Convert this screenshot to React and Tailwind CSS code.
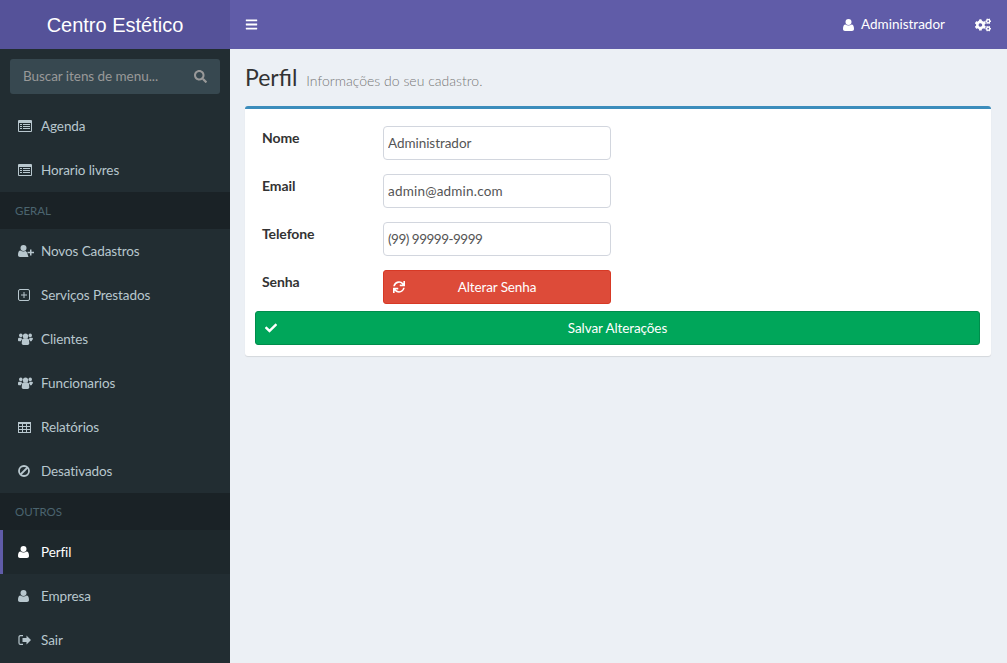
import React from 'react'
import { FaBars, FaSearch, FaCogs, FaSync, FaCheck } from 'react-icons/fa'

const font = "font-['Lato','Noto_Sans',sans-serif]"

function ListAltIcon() {
  return (
    <svg width="14" height="12" viewBox="0 0 14 12" fill="currentColor">
      <path fillRule="evenodd" d="M1 0h12a1 1 0 011 1v10a1 1 0 01-1 1H1a1 1 0 01-1-1V1a1 1 0 011-1zM1 3v8h12V3z" />
      <path d="M2 4h2v1H2zM5 4h7v1H5zM2 6h2v1H2zM5 6h7v1H5zM2 8h2v1H2zM5 8h7v1H5z" />
    </svg>
  )
}

function UserIcon() {
  return (
    <svg width="11" height="12" viewBox="0 0 11 12" fill="currentColor">
      <circle cx="5.5" cy="3" r="3" />
      <path d="M0 10c0-2.5.7-4.5 2.5-4.5.8.6 1.8 1 3 1s2.2-.4 3-1C10.3 5.5 11 7.5 11 10c0 1.2-.8 2-2 2H2c-1.2 0-2-.8-2-2z" />
    </svg>
  )
}

function UserPlusIcon() {
  return (
    <svg width="16" height="12" viewBox="0 0 16 12" fill="currentColor">
      <circle cx="5.5" cy="3" r="3" />
      <path d="M0 10c0-2.5.7-4.5 2.5-4.5.8.6 1.8 1 3 1 .8 0 1.5-.2 2.1-.5L9 7.5 9.5 9l1 3H2c-1.2 0-2-.8-2-2z" />
      <path d="M12 4.5h1.5v2.25H16v1.5h-2.5v2.25H12V8.25H9.5v-1.5H12z" />
    </svg>
  )
}

function PlusSquareIcon() {
  return (
    <svg width="12" height="12" viewBox="0 0 12 12" fill="none" stroke="currentColor">
      <rect x="0.5" y="0.5" width="11" height="11" rx="1.5" />
      <path d="M6 3v6M3 6h6" />
    </svg>
  )
}

function UsersIcon() {
  return (
    <svg width="15" height="12" viewBox="0 0 15 12" fill="currentColor">
      <circle cx="7.5" cy="3.2" r="2.6" />
      <circle cx="2.8" cy="2.4" r="1.8" />
      <circle cx="12.2" cy="2.4" r="1.8" />
      <path d="M4 7c0-1 1-1.5 2-1.5h3c1 0 2 .5 2 1.5l.3 3.3c0 1-.8 1.7-1.7 1.7H5.400c-.9 0-1.700-.7-1.700-1.700z" />
      <path d="M0 6c0-.8.6-1.2 1.5-1.2h2.2c-.2.6 0 1.2.3 1.6-.7.4-1 1-1 1.8H.8C.3 8.2 0 7.8 0 7.3z" />
      <path d="M15 6c0-.8-.6-1.2-1.5-1.2h-2.2c.2.6 0 1.2-.3 1.6.7.4 1 1 1 1.8h1.2c.5 0 .8-.4.8-.9z" />
    </svg>
  )
}

function TableIcon() {
  return (
    <svg width="13" height="11" viewBox="0 0 13 11" fill="none" stroke="currentColor">
      <rect x="0.5" y="0.5" width="12" height="10" />
      <path d="M0 1.5h13M0 4.5h13M0 7.5h13M4.500 1v10M8.500 1v10" />
    </svg>
  )
}

function BanIcon() {
  return (
    <svg width="12" height="12" viewBox="0 0 12 12" fill="none" stroke="currentColor" strokeWidth="1.8">
      <circle cx="6" cy="6" r="5" />
      <path d="M2.5 9.5l7-7" />
    </svg>
  )
}

function SignOutIcon() {
  return (
    <svg width="13" height="12" viewBox="0 0 13 12" fill="currentColor">
      <path d="M13 6L8.5 1.5V4h-4v4h4v2.500z" />
      <path d="M5 1.600H2.500A1.500 1.500 0 001 3.100v5.800a1.500 1.500 0 001.500 1.500H5" fill="none" stroke="currentColor" strokeWidth="1.2" />
    </svg>
  )
}

const topItems = [
  { label: 'Agenda', icon: ListAltIcon },
  { label: 'Horario livres', icon: ListAltIcon },
]

const geralItems = [
  { label: 'Novos Cadastros', icon: UserPlusIcon },
  { label: 'Serviços Prestados', icon: PlusSquareIcon },
  { label: 'Clientes', icon: UsersIcon },
  { label: 'Funcionarios', icon: UsersIcon },
  { label: 'Relatórios', icon: TableIcon },
  { label: 'Desativados', icon: BanIcon },
]

const outrosItems = [
  { label: 'Perfil', icon: UserIcon, active: true },
  { label: 'Empresa', icon: UserIcon },
  { label: 'Sair', icon: SignOutIcon },
]

function MenuItem({ label, icon: Icon, active }) {
  return (
    <a
      href="#"
      className={`flex h-11 items-center border-l-[3px] pl-[15px] ${
        active ? 'border-[#605ca8] bg-[#1e282c] text-white' : 'border-transparent text-[#b8c7ce]'
      }`}
    >
      <span className="flex w-[23px] shrink-0 items-center">
        <Icon />
      </span>
      <span className="text-[13.5px] leading-5 tracking-[-0.1px]">{label}</span>
    </a>
  )
}

function MenuHeader({ children }) {
  return (
    <div className="flex h-[37px] items-center bg-[#1a2226] pl-[15px] text-[11.5px] text-[#4b646f]">
      {children}
    </div>
  )
}

function Field({ label, value, className }) {
  return (
    <div className="flex items-start">
      <label className="mt-[2px] w-[121px] shrink-0 text-[14px] leading-5 font-bold tracking-[-0.1px] text-[#333]">{label}</label>
      <input
        readOnly
        value={value}
        className={`h-[34px] w-[228px] rounded-[4px] border border-[#d2d6de] px-1 text-[13.5px] text-[#555] outline-none ${className}`}
      />
    </div>
  )
}

export default function App() {
  return (
    <div className={`${font} flex h-[663px] overflow-hidden bg-[#ecf0f5]`}>
      {/* sidebar */}
      <aside className="flex w-[230px] shrink-0 flex-col bg-[#222d32]">
        <div className="flex h-[49px] shrink-0 items-center justify-center bg-[#555299] font-['Liberation_Sans',sans-serif] text-[20px] text-white">
          Centro Estético
        </div>
        <div className="mx-2.5 mt-2.5 mb-2.5 flex h-[35px] shrink-0 items-center justify-between rounded-[3px] bg-[#374850] px-[13px]">
          <span className="text-[13.5px] tracking-[-0.05px] text-[#999]">Buscar itens de menu...</span>
          <FaSearch className="text-[13px] text-[#999]" />
        </div>
        {topItems.map((item) => <MenuItem key={item.label} {...item} />)}
        <MenuHeader>GERAL</MenuHeader>
        {geralItems.map((item) => <MenuItem key={item.label} {...item} />)}
        <MenuHeader>OUTROS</MenuHeader>
        {outrosItems.map((item) => <MenuItem key={item.label} {...item} />)}
      </aside>

      <div className="flex min-w-0 flex-1 flex-col">
        {/* top bar */}
        <header className="flex h-[49px] shrink-0 items-center justify-between bg-[#605ca8] pr-4 pl-[15px] text-white">
          <FaBars className="text-[13px]" />
          <div className="flex items-center">
            <UserIcon />
            <span className="ml-[7px] text-[13.5px]">Administrador</span>
            <FaCogs className="ml-[30px] text-[16px]" />
          </div>
        </header>

        {/* content */}
        <main className="pt-[14px] pr-4 pl-[15px]">
          <div className="flex items-baseline">
            <h1 className="text-[23px] leading-7 text-[#333]">Perfil</h1>
            <small className="ml-[9px] text-[14px] font-light text-[#777]">Informações do seu cadastro.</small>
          </div>
          <section className="mt-[15px] rounded-[3px] border-t-[3px] border-[#3c8dbc] bg-white pt-[17px] pr-[11px] pb-[11px] pl-2.5 shadow-[0_1px_1px_rgba(0,0,0,0.1)]">
            <div className="flex flex-col gap-[14px] px-[7px]">
              <Field label="Nome" value="Administrador" className="tracking-[-0.05px]" />
              <Field label="Email" value="admin@admin.com" className="tracking-[0.2px]" />
              <Field label="Telefone" value="(99) 99999-9999" className="tracking-[-0.5px]" />
              <div className="flex items-start">
                <label className="mt-[2px] w-[121px] shrink-0 text-[14px] leading-5 font-bold tracking-[-0.1px] text-[#333]">Senha</label>
                <button className="relative flex h-[34px] w-[228px] items-center justify-center rounded-[3px] border border-[#d73925] bg-[#dd4b39] text-[13.5px] tracking-[-0.1px] text-white">
                  <FaSync className="absolute left-[9px] text-[12px]" />
                  Alterar Senha
                </button>
              </div>
            </div>
            <button className="relative mt-[7px] flex h-[34px] w-full items-center justify-center rounded-[3px] border border-[#008d4c] bg-[#00a65a] text-[13.5px] tracking-[-0.1px] text-white">
              <FaCheck className="absolute left-[9px] text-[12px]" />
              Salvar Alterações
            </button>
          </section>
        </main>
      </div>
    </div>
  )
}
